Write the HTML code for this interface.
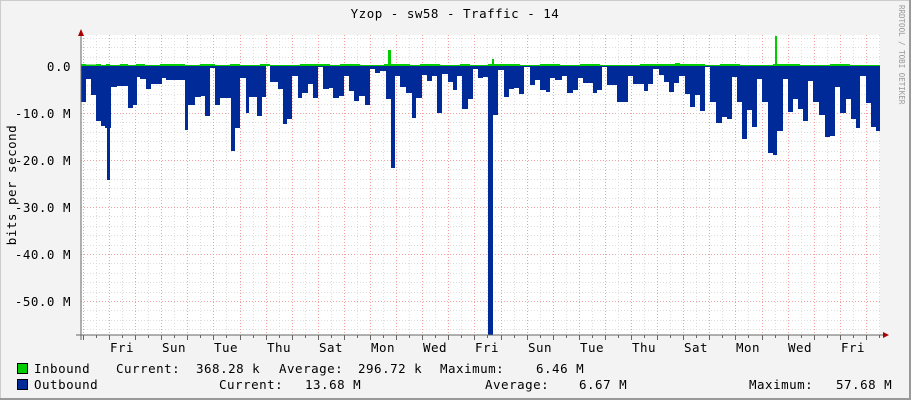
<!DOCTYPE html>
<html><head><meta charset="utf-8"><style>
html,body{margin:0;padding:0;background:#f3f3f3;}
svg{display:block;}
text{font-family:"DejaVu Sans Mono","Liberation Mono",monospace;font-size:12.5px;letter-spacing:0.5px;fill:#000;}
</style></head><body>
<svg width="911" height="400" xmlns="http://www.w3.org/2000/svg">
<rect x="0" y="0" width="911" height="400" fill="#f3f3f3"/>
<rect x="0" y="0" width="911" height="1" fill="#ccc"/>
<rect x="0" y="0" width="1" height="400" fill="#ccc"/>
<rect x="909" y="0" width="2" height="400" fill="#999"/>
<rect x="0" y="398" width="911" height="2" fill="#999"/>
<rect x="81" y="35" width="799" height="300" fill="#fff"/>
<g id="grid"></g>
<path id="out" fill="#002a97" d=""/>
<path id="inb" fill="#00cc00" d=""/>
<line x1="81" y1="30" x2="81" y2="340" stroke="#666"/>
<line x1="76" y1="335" x2="885" y2="335" stroke="#666"/>
<polygon points="78,36 84,36 81,29" fill="#a00"/>
<polygon points="883,332 883,338 889,335" fill="#a00"/>
<g id="ticks"></g>
<text x="455" y="18" text-anchor="middle">Yzop - sw58 - Traffic - 14</text>
<g text-anchor="end">
<text x="71" y="71">0.0</text>
<text x="71" y="118">-10.0 M</text>
<text x="71" y="165">-20.0 M</text>
<text x="71" y="212">-30.0 M</text>
<text x="71" y="259">-40.0 M</text>
<text x="71" y="306">-50.0 M</text>
</g>
<text transform="translate(16,185) rotate(-90)" text-anchor="middle">bits per second</text>
<text transform="translate(899,5) rotate(90)" style="font-size:7.5px;letter-spacing:0;fill:#999">RRDTOOL / TOBI OETIKER</text>
<g text-anchor="middle">
<text x="122" y="352">Fri</text><text x="174" y="352">Sun</text><text x="226" y="352">Tue</text>
<text x="279" y="352">Thu</text><text x="331" y="352">Sat</text><text x="383" y="352">Mon</text>
<text x="435" y="352">Wed</text><text x="487" y="352">Fri</text><text x="540" y="352">Sun</text>
<text x="592" y="352">Tue</text><text x="644" y="352">Thu</text><text x="696" y="352">Sat</text>
<text x="748" y="352">Mon</text><text x="800" y="352">Wed</text><text x="853" y="352">Fri</text>
</g>
<rect x="17.5" y="363.5" width="10" height="10" fill="#00cc00" stroke="#000"/>
<rect x="17.5" y="379.5" width="10" height="10" fill="#002a97" stroke="#000"/>
<text x="34" y="373">Inbound</text><text x="116" y="373">Current:</text><text x="196" y="373">368.28 k</text>
<text x="279" y="373">Average:</text><text x="358" y="373">296.72 k</text><text x="440" y="373">Maximum:</text><text x="536" y="373">6.46 M</text>
<text x="34" y="389">Outbound</text><text x="219" y="389">Current:</text><text x="305" y="389">13.68 M</text>
<text x="485" y="389">Average:</text><text x="579" y="389">6.67 M</text><text x="749" y="389">Maximum:</text><text x="836" y="389">57.68 M</text>
</svg>
<script>
var ns="http://www.w3.org/2000/svg";
function ln(g,x1,y1,x2,y2,c,dash){var l=document.createElementNS(ns,"line");l.setAttribute("x1",x1);l.setAttribute("y1",y1);l.setAttribute("x2",x2);l.setAttribute("y2",y2);l.setAttribute("stroke",c);l.setAttribute("stroke-width",1);if(dash)l.setAttribute("stroke-dasharray",dash);g.appendChild(l);}
var g=document.getElementById("grid"),t=document.getElementById("ticks");
for(var i=-3;i<=28;i++){var y=66+i*9.4;if(y<35||y>335)continue;var maj=(i%5==0);ln(g,81,Math.round(y)+.5,880,Math.round(y)+.5,maj?"#f2a0a0":"#ddd","1,2");}
for(var k=-2;k<70;k++){var x=109+k*13.05;if(x<82||x>880)continue;var maj=(k%2==0);ln(g,Math.round(x)+.5,35,Math.round(x)+.5,335,maj?"#f2a0a0":"#ddd","1,2");ln(t,Math.round(x)+.5,335,Math.round(x)+.5,maj?340:338,"#666");}
var d=[[86,102],[91,79],[96,95],[101,121],[105,126],[107,128],[110,180],[111,128],[117,87],[128,86],[133,108],[137,105],[140,77],[146,79],[151,89],[156,84],[162,84],[166,78],[178,80],[185,80],[188,130],[195,105],[201,97],[205,96],[210,116],[215,68],[220,105],[224,98],[231,98],[235,151],[240,128],[246,78],[249,113],[252,97],[257,97],[262,116],[266,97],[270,66],[278,82],[283,89],[287,124],[292,119],[298,76],[302,98],[308,93],[313,84],[318,98],[323,67],[329,89],[333,88],[339,98],[344,96],[349,76],[354,91],[359,101],[365,96],[370,105],[375,69],[380,73],[386,71],[391,99],[395,168],[400,76],[406,87],[412,93],[416,118],[422,98],[427,75],[432,81],[437,76],[442,113],[448,74],[453,82],[457,90],[462,76],[468,109],[473,99],[478,69],[483,78],[488,77],[493,335],[498,115],[504,70],[509,97],[514,89],[519,88],[524,94],[530,67],[535,85],[540,80],[546,90],[550,92],[555,78],[562,80],[567,76],[573,93],[578,90],[583,78],[587,83],[593,83],[597,93],[602,90],[607,67],[612,85],[617,85],[622,102],[628,102],[633,76],[639,84],[644,84],[648,91],[653,84],[659,69],[664,75],[669,82],[674,92],[679,83],[685,76],[690,94],[695,107],[700,95],[705,111],[710,67],[716,102],[722,123],[727,117],[732,119],[737,77],[742,102],[747,139],[752,110],[757,127],[762,79],[768,102],[773,153],[777,155],[783,131],[788,79],[793,112],[798,99],[803,109],[808,121],[813,81],[819,102],[825,115],[830,137],[835,136],[840,87],[846,113],[851,99],[856,119],[860,128],[866,76],[871,103],[876,127],[880,131]];
var p="M81,66";d.forEach(function(e){p+="V"+e[1]+"H"+e[0];});p+="V66Z";
document.getElementById("out").setAttribute("d",p);
var gi=[[86,64.5],[96,64],[101,65],[106,64],[110,65],[120,64],[128,65],[136,64],[145,65],[160,64],[185,65],[200,64],[215,65],[230,64],[240,65],[260,64],[270,65],[300,64],[330,65],[340,64],[360,65],[384,64],[388,50],[391,64],[410,65],[420,64],[440,65],[460,64],[470,65],[488,64],[492,59],[494,64],[520,65],[540,64],[560,65],[580,64],[600,65],[640,64],[675,63],[680,64],[705,65],[720,64],[740,65],[773,64],[775,36],[777,64],[800,65],[830,64],[850,65],[880,64]];
var q="M81,66V64";gi.forEach(function(e){q+="H"+e[0]+"V"+e[1];});q+="V66Z";
document.getElementById("inb").setAttribute("d",q);
</script>
</body></html>
